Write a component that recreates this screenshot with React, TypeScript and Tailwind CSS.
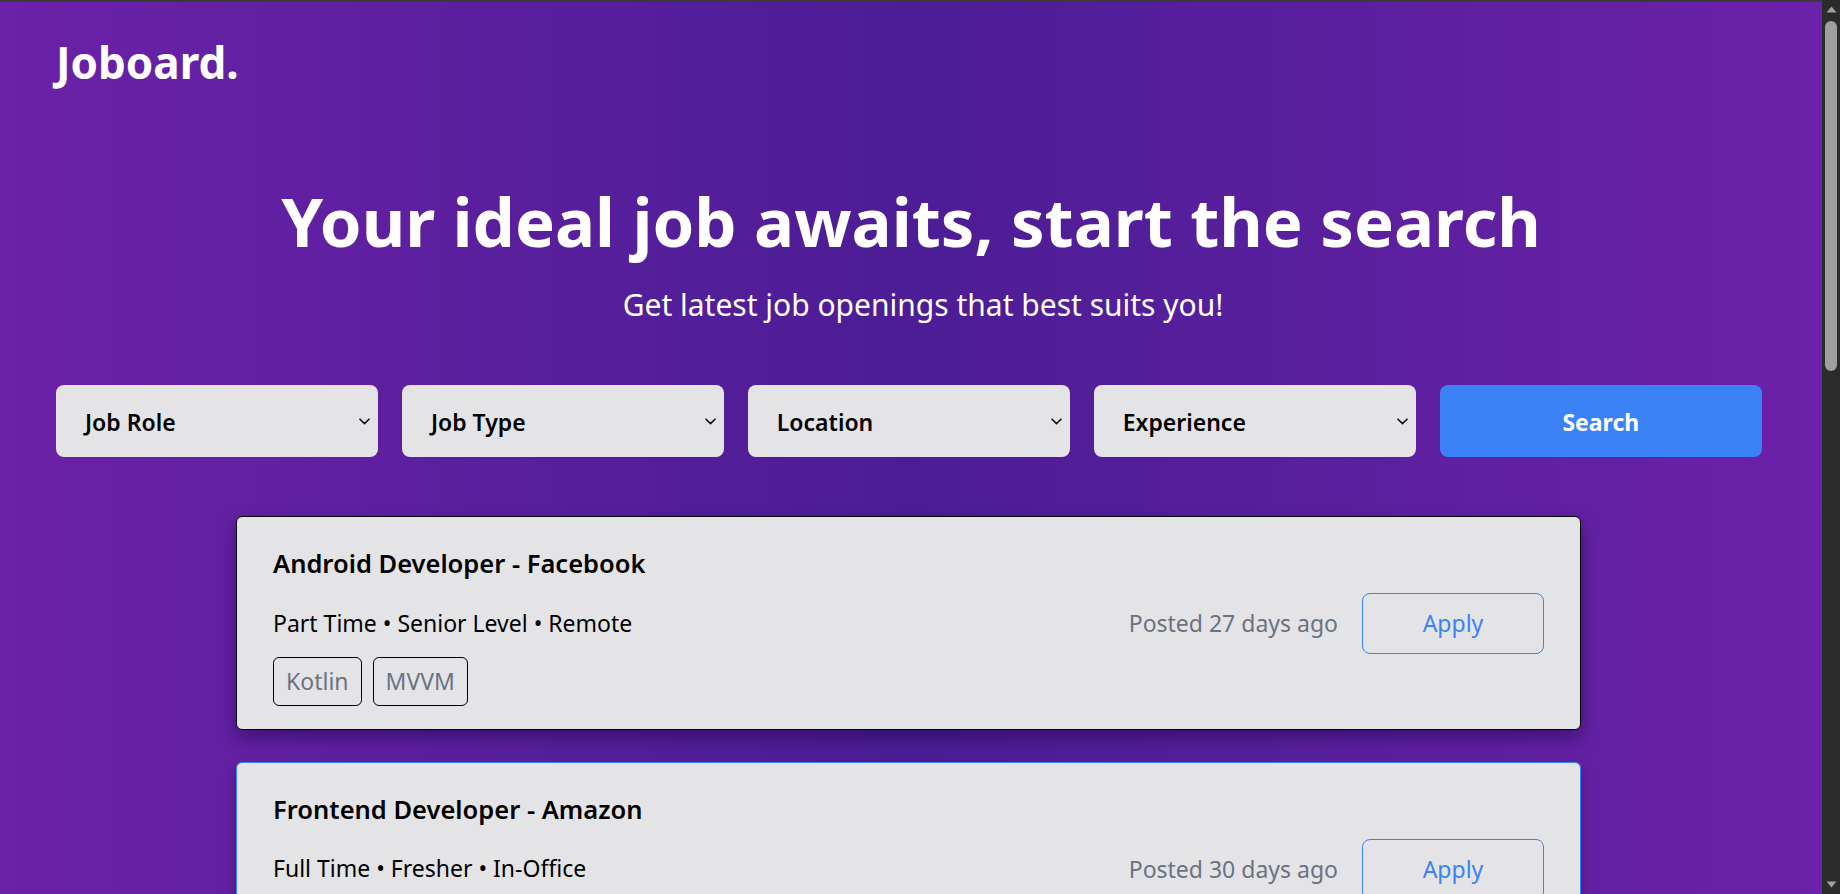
import React from "react";

const font = { fontFamily: '"Segoe UI", "Noto Sans", "Open Sans", sans-serif' };

function Chevron() {
  return (
    <svg width="11" height="7" viewBox="0 0 11 7" fill="none" className="shrink-0">
      <path d="M1 1.2 L5.5 5.6 L10 1.2" stroke="#111" strokeWidth="1.6" strokeLinecap="round" strokeLinejoin="round" />
    </svg>
  );
}

function SelectBox({ label }: { label: string }) {
  return (
    <div className="h-[72px] rounded-lg bg-[#e4e4e7] flex items-center justify-between pl-[29px] pr-[8px]">
      <span className="mt-[3px] text-[23px] font-semibold text-black leading-none">{label}</span>
      <Chevron />
    </div>
  );
}

type Job = {
  title: string;
  meta: string;
  tags: string[];
  posted: string;
  hover?: boolean;
};

const jobs: Job[] = [
  { title: "Android Developer - Facebook", meta: "Part Time • Senior Level • Remote", tags: ["Kotlin", "MVVM"], posted: "Posted 27 days ago" },
  { title: "Frontend Developer - Amazon", meta: "Full Time • Fresher • In-Office", tags: ["React", "JavaScript"], posted: "Posted 30 days ago", hover: true },
];

function JobCard({ job }: { job: Job }) {
  return (
    <div
      className={
        "w-[1345px] ml-[236px] shrink-0 rounded-md bg-[#e4e4e7] border flex items-center justify-between px-[36px] pt-[34px] pb-[23px] " +
        (job.hover ? "border-[#3b82f6] shadow-[0_6px_14px_rgba(0,0,0,0.25)]" : "border-black shadow-[0_8px_18px_rgba(20,0,60,0.45)]")
      }
    >
      <div className="flex flex-col">
        <div className="text-[25.5px] font-semibold text-black leading-none">{job.title}</div>
        <div className="mt-[35px] text-[23px] text-black leading-none">{job.meta}</div>
        <div className="mt-[22px] flex gap-[11px]">
          {job.tags.map((t) => (
            <span key={t} className="h-[49px] flex items-center px-3 border border-black rounded-md text-[23px] text-[#6b7280] leading-none">
              {t}
            </span>
          ))}
        </div>
      </div>
      <div className="flex items-center gap-[24px] -mt-[9px]">
        <span className="text-[23px] text-[#6b7280] leading-none">{job.posted}</span>
        <button className="w-[182px] h-[61px] rounded-lg border border-[#3b82f6] text-[#3b82f6] text-[23px] leading-none flex items-center justify-center">
          Apply
        </button>
      </div>
    </div>
  );
}

export default function App() {
  return (
    <div className="h-screen w-full flex overflow-hidden bg-[#2b2b2b]" style={font}>
      <div className="flex-1 flex flex-col overflow-hidden bg-gradient-to-r from-[#6b21a8] via-[#4c1d95] to-[#6b21a8]">
        <div className="h-[2px] bg-[#3a3a3a] shrink-0" />
        <div className="pl-[56px] pt-[38px] shrink-0">
          <div className="text-[44px] font-bold text-white leading-none">Joboard.</div>
        </div>
        <h1 className="mt-[104px] text-center text-[67px] font-bold text-white leading-none shrink-0">
          Your ideal job awaits, start the search
        </h1>
        <p className="mt-[35px] pl-[24px] text-center text-[30px] text-white leading-none shrink-0">
          Get latest job openings that best suits you!
        </p>
        <div className="mt-[65px] pl-[56px] shrink-0">
          <div className="w-[1706px] grid grid-cols-5 gap-[23.5px]">
            <SelectBox label="Job Role" />
            <SelectBox label="Job Type" />
            <SelectBox label="Location" />
            <SelectBox label="Experience" />
            <button className="h-[72px] rounded-lg bg-[#3b82f6] text-white text-[23px] font-bold leading-none">
              <span className="inline-block mt-[3px]">Search</span>
            </button>
          </div>
        </div>
        <div className="mt-[59px] flex flex-col gap-[32px] shrink-0">
          {jobs.map((j) => (
            <JobCard key={j.title} job={j} />
          ))}
        </div>
      </div>
      <div className="w-[18px] shrink-0 bg-[#2b2b2b] flex flex-col items-center py-[6px]">
        <svg width="11" height="7" viewBox="0 0 11 7"><path d="M5.5 0.5 L10.5 6.5 L0.5 6.5 Z" fill="#9f9f9f" /></svg>
        <div className="mt-[8px] w-[12px] h-[350px] rounded-full bg-[#9f9f9f]" />
        <div className="flex-1" />
        <svg width="11" height="7" viewBox="0 0 11 7"><path d="M0.5 0.5 L10.5 0.5 L5.5 6.5 Z" fill="#9f9f9f" /></svg>
      </div>
    </div>
  );
}
